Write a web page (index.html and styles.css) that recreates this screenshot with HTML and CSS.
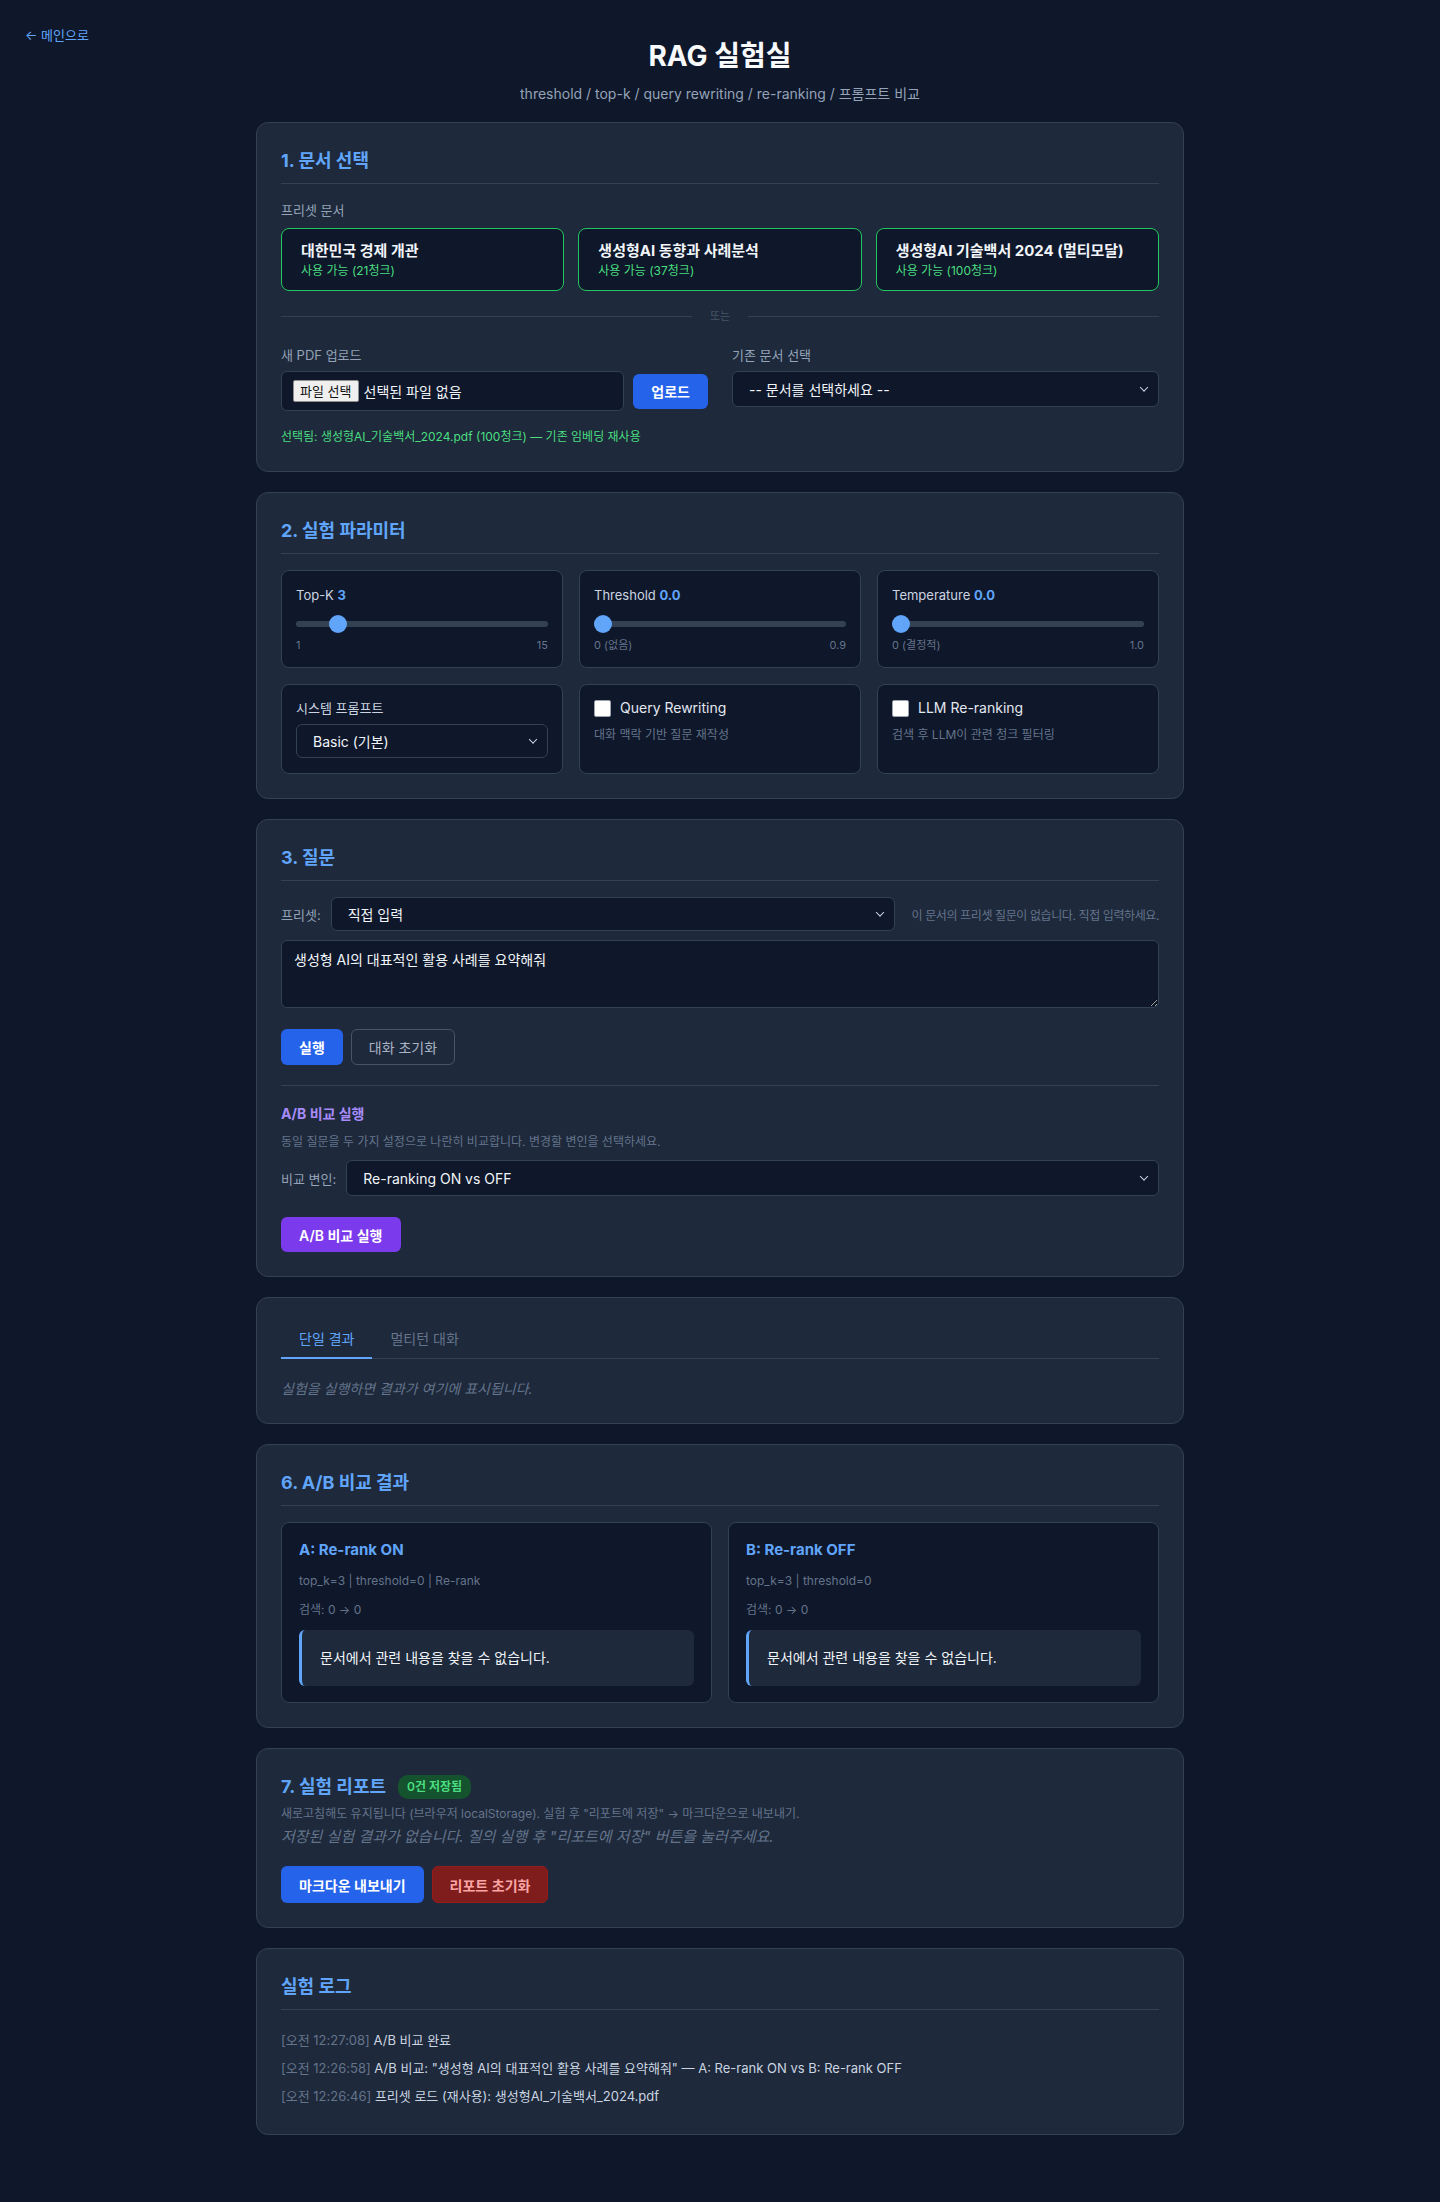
FILE: index.html
```html
<!DOCTYPE html>
<html lang="ko">
<head>
  <meta charset="UTF-8" />
  <meta name="viewport" content="width=device-width, initial-scale=1.0"/>
  <title>RAG 실험실</title>
  <link rel="stylesheet" href="styles.css">
</head>
<body>
  <a class="back-link" href="#">← 메인으로</a>

  <div class="page">
    <header class="page-head">
      <h1>RAG 실험실</h1>
      <p>threshold / top-k / query rewriting / re-ranking / 프롬프트 비교</p>
    </header>

    <!-- 1. 문서 -->
    <section class="card">
      <h2>1. 문서 선택</h2>
      <div class="field-label">프리셋 문서</div>
      <div class="preset-grid">
        <div class="preset">
          <div class="preset-name">대한민국 경제 개관</div>
          <div class="preset-status">사용 가능 (21청크)</div>
        </div>
        <div class="preset">
          <div class="preset-name">생성형AI 동향과 사례분석</div>
          <div class="preset-status">사용 가능 (37청크)</div>
        </div>
        <div class="preset">
          <div class="preset-name">생성형AI 기술백서 2024 (멀티모달)</div>
          <div class="preset-status">사용 가능 (100청크)</div>
        </div>
      </div>

      <div class="or-line"><span>또는</span></div>

      <div class="two-col">
        <div>
          <div class="field-label">새 PDF 업로드</div>
          <div class="upload-row">
            <div class="file-box"><span class="file-btn">파일 선택</span>선택된 파일 없음</div>
            <button class="btn btn-blue">업로드</button>
          </div>
        </div>
        <div>
          <div class="field-label">기존 문서 선택</div>
          <div class="select-wrap">
            <select><option>-- 문서를 선택하세요 --</option></select>
          </div>
        </div>
      </div>
      <p class="selected-doc">선택됨: 생성형AI_기술백서_2024.pdf (100청크) — 기존 임베딩 재사용</p>
    </section>

    <!-- 2. 파라미터 -->
    <section class="card">
      <h2>2. 실험 파라미터</h2>
      <div class="param-grid">
        <div class="param">
          <div class="param-label">Top-K <b>3</b></div>
          <input class="range" type="range" min="1" max="15" value="3">
          <div class="range-ticks"><span>1</span><span>15</span></div>
        </div>
        <div class="param">
          <div class="param-label">Threshold <b>0.0</b></div>
          <input class="range" type="range" min="0" max="0.9" step="0.1" value="0">
          <div class="range-ticks"><span>0 (없음)</span><span>0.9</span></div>
        </div>
        <div class="param">
          <div class="param-label">Temperature <b>0.0</b></div>
          <input class="range" type="range" min="0" max="1" step="0.1" value="0">
          <div class="range-ticks"><span>0 (결정적)</span><span>1.0</span></div>
        </div>

        <div class="param opt">
          <div class="param-label">시스템 프롬프트</div>
          <div class="select-wrap">
            <select class="sm"><option>Basic (기본)</option></select>
          </div>
        </div>
        <div class="param opt">
          <label class="check"><input type="checkbox">Query Rewriting</label>
          <div class="param-desc">대화 맥락 기반 질문 재작성</div>
        </div>
        <div class="param opt">
          <label class="check"><input type="checkbox">LLM Re-ranking</label>
          <div class="param-desc">검색 후 LLM이 관련 청크 필터링</div>
        </div>
      </div>
    </section>

    <!-- 3. 질문 -->
    <section class="card">
      <h2>3. 질문</h2>
      <div class="inline-row">
        <span class="row-label">프리셋:</span>
        <div class="select-wrap grow">
          <select class="sm"><option>직접 입력</option></select>
        </div>
        <span class="row-hint">이 문서의 프리셋 질문이 없습니다. 직접 입력하세요.</span>
      </div>
      <textarea class="question">생성형 AI의 대표적인 활용 사례를 요약해줘</textarea>
      <div class="btn-row">
        <button class="btn btn-blue">실행</button>
        <button class="btn btn-ghost">대화 초기화</button>
      </div>

      <div class="ab-box">
        <h3>A/B 비교 실행</h3>
        <p class="muted-sm">동일 질문을 두 가지 설정으로 나란히 비교합니다. 변경할 변인을 선택하세요.</p>
        <div class="inline-row">
          <span class="row-label">비교 변인:</span>
          <div class="select-wrap grow">
            <select><option>Re-ranking ON vs OFF</option></select>
          </div>
        </div>
        <button class="btn btn-purple">A/B 비교 실행</button>
      </div>
    </section>

    <!-- 결과 탭 -->
    <section class="card">
      <div class="tabs">
        <button class="tab active">단일 결과</button>
        <button class="tab">멀티턴 대화</button>
      </div>
      <p class="empty">실험을 실행하면 결과가 여기에 표시됩니다.</p>
    </section>

    <!-- 6. A/B 결과 -->
    <section class="card">
      <h2>6. A/B 비교 결과</h2>
      <div class="ab-grid">
        <div class="ab-result">
          <h4>A: Re-rank ON</h4>
          <p class="meta">top_k=3 | threshold=0 | Re-rank</p>
          <p class="meta">검색: 0 → 0</p>
          <div class="answer">문서에서 관련 내용을 찾을 수 없습니다.</div>
        </div>
        <div class="ab-result">
          <h4>B: Re-rank OFF</h4>
          <p class="meta">top_k=3 | threshold=0</p>
          <p class="meta">검색: 0 → 0</p>
          <div class="answer">문서에서 관련 내용을 찾을 수 없습니다.</div>
        </div>
      </div>
    </section>

    <!-- 7. 리포트 -->
    <section class="card">
      <h2 class="plain">7. 실험 리포트 <span class="badge">0건 저장됨</span></h2>
      <p class="muted-sm">새로고침해도 유지됩니다 (브라우저 localStorage). 실험 후 "리포트에 저장" → 마크다운으로 내보내기.</p>
      <p class="empty big">저장된 실험 결과가 없습니다. 질의 실행 후 "리포트에 저장" 버튼을 눌러주세요.</p>
      <div class="btn-row report-btns">
        <button class="btn btn-blue">마크다운 내보내기</button>
        <button class="btn btn-red">리포트 초기화</button>
      </div>
    </section>

    <!-- 로그 -->
    <section class="card">
      <h2>실험 로그</h2>
      <div class="log">
        <div class="log-line"><span class="ts">[오전 12:27:08]</span> A/B 비교 완료</div>
        <div class="log-line"><span class="ts">[오전 12:26:58]</span> A/B 비교: "생성형 AI의 대표적인 활용 사례를 요약해줘" — A: Re-rank ON vs B: Re-rank OFF</div>
        <div class="log-line"><span class="ts">[오전 12:26:46]</span> 프리셋 로드 (재사용): 생성형AI_기술백서_2024.pdf</div>
      </div>
    </section>
  </div>
</body>
</html>
```

FILE: styles.css
```css
* {
  box-sizing: border-box;
}
body {
  margin: 0;
  background-color: #0f172a;
  color: #e2e8f0;
  font-family: Inter, "Noto Sans CJK KR", sans-serif;
  font-size: 14px;
  min-height: 2202px;
}
.back-link {
  position: absolute;
  top: 26px;
  left: 25px;
  color: #60a5fa;
  font-size: 13px;
  line-height: 18px;
  text-decoration: none;
}
.page {
  width: 928px;
  margin: 0 auto;
  padding: 38px 0 60px;
}
.page-head {
  text-align: center;
  margin-bottom: 18px;
}
.page-head h1 {
  margin: 0;
  font-size: 28px;
  line-height: 36px;
  font-weight: 700;
  color: #f8fafc;
}
.page-head p {
  margin: 10px 0 0;
  font-size: 14px;
  line-height: 20px;
  color: #94a3b8;
}

/* 공통 카드 */
.card {
  background-color: #1e293b;
  border: 1px solid #334155;
  border-radius: 12px;
  padding: 24px;
  margin-bottom: 20px;
}
.card h2 {
  margin: 0 0 16px;
  padding-bottom: 8px;
  border-bottom: 1px solid #334155;
  font-size: 18px;
  line-height: 28px;
  font-weight: 700;
  color: #60a5fa;
}
.card h2.plain {
  border-bottom: none;
  padding-bottom: 0;
  margin-bottom: 4px;
  display: flex;
  align-items: center;
  gap: 12px;
}
.field-label {
  font-size: 13px;
  line-height: 20px;
  color: #94a3b8;
  margin-bottom: 8px;
}

/* 프리셋 문서 */
.preset-grid {
  display: grid;
  grid-template-columns: repeat(3, 1fr);
  gap: 14px;
}
.preset {
  background-color: #0f172a;
  border: 1.5px solid #22c55e;
  border-radius: 8px;
  padding: 11px 19px;
  height: 63px;
}
.preset-name {
  font-size: 15px;
  line-height: 22px;
  font-weight: 700;
  color: #f1f5f9;
  white-space: nowrap;
}
.preset-status {
  font-size: 12px;
  line-height: 18px;
  color: #4ade80;
}
.or-line {
  display: flex;
  align-items: center;
  gap: 18px;
  margin: 18px 0 22px;
  font-size: 11px;
  line-height: 14px;
  color: #475569;
}
.or-line::before, .or-line::after {
  content: "";
  flex: 1;
  height: 1px;
  background-color: #334155;
}
.two-col {
  display: grid;
  grid-template-columns: 1fr 1fr;
  gap: 24px;
}
.two-col .field-label {
  margin-bottom: 6px;
}
.upload-row {
  display: flex;
  align-items: center;
  gap: 9px;
}
.file-box {
  flex: 1;
  height: 40px;
  display: flex;
  align-items: center;
  padding: 0 11px;
  background-color: #0f172a;
  border: 1px solid #334155;
  border-radius: 6px;
  font-size: 14px;
  color: #f1f5f9;
}
.file-btn {
  background-color: #efefef;
  color: #111;
  border: 1px solid #8f8f8f;
  border-radius: 2px;
  font-size: 13px;
  line-height: 20px;
  padding: 0 6px;
  margin-right: 5px;
}
.selected-doc {
  margin: 16px 0 0;
  font-size: 12px;
  line-height: 20px;
  color: #4ade80;
}

/* 셀렉트 */
.select-wrap {
  position: relative;
}
.select-wrap.grow {
  flex: 1;
}
.select-wrap::after {
  content: "";
  position: absolute;
  right: 12px;
  top: 50%;
  width: 5px;
  height: 5px;
  border-right: 1.2px solid #cbd5e1;
  border-bottom: 1.2px solid #cbd5e1;
  transform: translateY(-75%) rotate(45deg);
  pointer-events: none;
}
select {
  -webkit-appearance: none;
  appearance: none;
  width: 100%;
  height: 36px;
  background-color: #0f172a;
  color: #f1f5f9;
  border: 1px solid #334155;
  border-radius: 6px;
  padding: 0 32px 0 16px;
  font-family: inherit;
  font-size: 14px;
}
select.sm {
  height: 34px;
}

/* 파라미터 */
.param-grid {
  display: grid;
  grid-template-columns: repeat(3, 1fr);
  gap: 16px;
}
.param {
  background-color: #0f172a;
  border: 1px solid #334155;
  border-radius: 8px;
  padding: 14px;
}
.param.opt {
  padding: 13px 14px 15px;
}
.param-label {
  font-size: 13px;
  line-height: 20px;
  color: #cbd5e1;
}
.param-label b {
  color: #60a5fa;
}
.param.opt .param-label {
  margin-bottom: 6px;
}
.range {
  -webkit-appearance: none;
  appearance: none;
  display: block;
  width: 100%;
  height: 18px;
  margin: 10px 0 0;
  background: transparent;
}
.range::-webkit-slider-runnable-track {
  height: 6px;
  border-radius: 3px;
  background-color: #334155;
}
.range::-webkit-slider-thumb {
  -webkit-appearance: none;
  width: 18px;
  height: 18px;
  margin-top: -6px;
  border-radius: 50%;
  border: none;
  background-color: #60a5fa;
}
.range-ticks {
  display: flex;
  justify-content: space-between;
  margin-top: 4px;
  font-size: 11px;
  line-height: 16px;
  color: #64748b;
}
.check {
  display: flex;
  align-items: center;
  gap: 9px;
  font-size: 14px;
  line-height: 20px;
  color: #e2e8f0;
}
.check input {
  -webkit-appearance: none;
  appearance: none;
  width: 17px;
  height: 17px;
  margin: 0;
  background-color: #fff;
  border: 1px solid #9ca3af;
  border-radius: 2px;
}
.param-desc {
  margin-top: 8px;
  font-size: 12px;
  line-height: 18px;
  color: #64748b;
}

/* 질문 */
.inline-row {
  display: flex;
  align-items: center;
  gap: 10px;
}
.row-label {
  font-size: 13px;
  color: #94a3b8;
}
.row-hint {
  margin-left: 7px;
  font-size: 12px;
  color: #64748b;
  white-space: nowrap;
  letter-spacing: -0.4px;
}
.question {
  display: block;
  width: 100%;
  height: 68px;
  margin-top: 9px;
  padding: 8px 12px;
  background-color: #0f172a;
  color: #f1f5f9;
  border: 1px solid #334155;
  border-radius: 6px;
  font-family: inherit;
  font-size: 14px;
  line-height: 21px;
}
.btn-row {
  display: flex;
  gap: 8px;
  margin-top: 21px;
}
.btn {
  height: 36px;
  padding: 0 17px;
  border: 1px solid transparent;
  border-radius: 6px;
  font-family: inherit;
  font-size: 14px;
  font-weight: 600;
  cursor: pointer;
}
.btn-blue {
  background-color: #2563eb;
  color: #fff;
}
.upload-row .btn {
  height: 35px;
}
.btn-ghost {
  background: transparent;
  border-color: #475569;
  color: #a8b3c4;
  font-weight: 400;
}
.btn-purple {
  height: 35px;
  margin-top: 21px;
  background-color: #7c3aed;
  color: #fff;
}
.btn-red {
  background-color: #7f1d1d;
  border-color: #991b1b;
  color: #fca5a5;
}
.ab-box {
  margin-top: 20px;
  border-top: 1px solid #334155;
  padding-top: 18px;
}
.ab-box h3 {
  margin: 0;
  font-size: 14px;
  line-height: 20px;
  color: #a78bfa;
}
.muted-sm {
  margin: 9px 0;
  font-size: 12px;
  line-height: 18px;
  color: #64748b;
}

/* 탭 */
.tabs {
  display: flex;
  border-bottom: 1px solid #334155;
}
.tab {
  background: none;
  border: none;
  border-bottom: 2px solid transparent;
  margin-bottom: -1px;
  padding: 7px 18px 8px;
  font-family: inherit;
  font-size: 14px;
  line-height: 20px;
  color: #64748b;
}
.tab.active {
  color: #60a5fa;
  border-bottom-color: #60a5fa;
}
.empty {
  margin: 20px 0 0;
  font-size: 14px;
  line-height: 20px;
  font-style: italic;
  color: #64748b;
}
.empty.big {
  margin-top: 3px;
  font-size: 15px;
  line-height: 22px;
}

/* A/B 결과 */
.ab-grid {
  display: grid;
  grid-template-columns: 1fr 1fr;
  gap: 16px;
}
.ab-result {
  background-color: #0f172a;
  border: 1px solid #334155;
  border-radius: 8px;
  padding: 16px 17px;
}
.ab-result h4 {
  margin: 0;
  font-size: 15px;
  line-height: 22px;
  color: #60a5fa;
}
.meta {
  margin: 11px 0 0;
  font-size: 12px;
  line-height: 18px;
  color: #64748b;
}
.answer {
  margin-top: 11px;
  padding: 17px 18px;
  background-color: #1e293b;
  border-left: 3px solid #60a5fa;
  border-radius: 6px;
  font-size: 14px;
  line-height: 22px;
  color: #f1f5f9;
}

/* 리포트 */
.badge {
  background-color: #14532d;
  color: #4ade80;
  font-size: 12px;
  line-height: 24px;
  font-weight: 600;
  padding: 0 9px;
  border-radius: 10px;
}
.card h2.plain + .muted-sm {
  margin: 0;
}
.report-btns {
  margin-top: 18px;
}
.report-btns .btn {
  height: 37px;
}

/* 로그 */
.log {
  margin-top: 14px;
}
.log-line {
  padding: 4px 0;
  font-size: 13px;
  line-height: 20px;
  color: #cbd5e1;
}
.log-line .ts {
  color: #64748b;
}
```
